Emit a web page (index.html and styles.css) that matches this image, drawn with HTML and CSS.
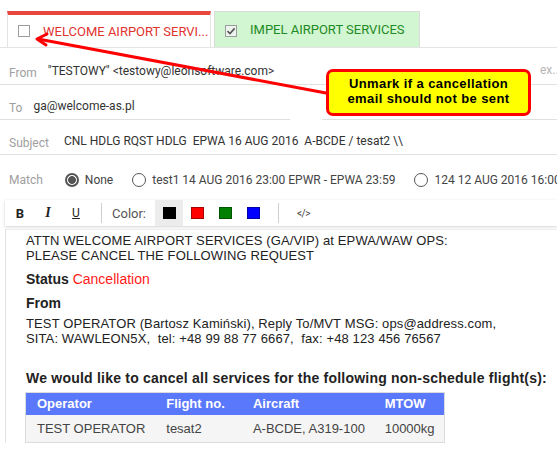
FILE: index.html
```html
<!DOCTYPE html>
<html>
<head>
<meta charset="utf-8">
<link rel="stylesheet" href="styles.css">
</head>
<body>
<div class="app">
  <div class="tabs">
    <div class="tab tab-active"><span class="cb"></span><span class="tab-label">WELCOME AIRPORT SERVI...</span></div>
    <div class="tab tab-checked"><span class="cb cb-checked"><svg width="10" height="10" viewBox="0 0 10 10"><path d="M1.5 5.2 L4 7.6 L8.6 2.4" fill="none" stroke="#555" stroke-width="1.6"/></svg></span><span class="tab-label">IMPEL AIRPORT SERVICES</span></div>
  </div>

  <div class="fields">
    <div class="row row-line">
      <span class="lbl lbl-from">From</span>
      <span class="val">"TESTOWY" &lt;testowy@leonsoftware.com&gt;</span>
      <span class="ph">ex...</span>
    </div>
    <div class="row row-split">
      <div class="field field-to"><span class="lbl lbl-to">To</span><span class="val">ga@welcome-as.pl</span></div>
      <div class="field field-cc"></div>
    </div>
    <div class="row row-line">
      <span class="lbl lbl-subject">Subject</span>
      <span class="val">CNL HDLG RQST HDLG&nbsp; EPWA 16 AUG 2016&nbsp; A-BCDE / tesat2 \\</span>
    </div>
    <div class="match">
      <span class="lbl lbl-match">Match</span>
      <span class="radio radio-on"></span><span class="opt">None</span>
      <span class="radio"></span><span class="opt">test1 14 AUG 2016 23:00 EPWR - EPWA 23:59</span>
      <span class="radio"></span><span class="opt">124 12 AUG 2016 16:00</span>
    </div>
  </div>

  <div class="toolbar">
    <span class="tb-btn tb-b">B</span>
    <span class="tb-btn tb-i">I</span>
    <span class="tb-btn tb-u">U</span>
    <span class="tb-sep"></span>
    <span class="tb-color">Color:</span>
    <span class="sw-box sw-active"><span class="sw sw-black"></span></span>
    <span class="sw-box"><span class="sw sw-red"></span></span>
    <span class="sw-box"><span class="sw sw-green"></span></span>
    <span class="sw-box"><span class="sw sw-blue"></span></span>
    <span class="tb-sep tb-sep2"></span>
    <span class="tb-code">&lt;/&gt;</span>
  </div>

  <div class="editor">
    <p class="p-attn">ATTN WELCOME AIRPORT SERVICES (GA/VIP) at EPWA/WAW OPS:<br>PLEASE CANCEL THE FOLLOWING REQUEST</p>
    <p class="p-status"><b>Status</b> <span class="red">Cancellation</span></p>
    <p class="p-from"><b>From</b></p>
    <p class="p-op">TEST OPERATOR (Bartosz Kamiński), Reply To/MVT MSG: ops@address.com,<br>SITA: WAWLEON5X,&nbsp; tel: +48 99 88 77 6667,&nbsp; fax: +48 123 456 76567</p>
    <p class="p-cancel"><b>We would like to cancel all services for the following non-schedule flight(s):</b></p>
    <table class="flights">
      <thead>
        <tr><th class="c1">Operator</th><th class="c2">Flight no.</th><th class="c3">Aircraft</th><th class="c4">MTOW</th></tr>
      </thead>
      <tbody>
        <tr><td>TEST OPERATOR</td><td>tesat2</td><td>A-BCDE, A319-100</td><td>10000kg</td></tr>
      </tbody>
    </table>
  </div>

  <svg class="arrow" width="557" height="452" viewBox="0 0 557 452">
    <path d="M326 93 L38 39" fill="none" stroke="#ff0000" stroke-width="3" stroke-linecap="round"/>
    <path d="M47 34 L37 39 L46 45" fill="none" stroke="#ff0000" stroke-width="3" stroke-linecap="round" stroke-linejoin="round"/>
  </svg>

  <div class="callout">Unmark if a cancellation<br>email should not be sent</div>
</div>
</body>
</html>
```

FILE: styles.css
```css
* { box-sizing: border-box; }
html, body { margin: 0; padding: 0; }
body {
  width: 557px;
  height: 452px;
  overflow: hidden;
  background: #fff;
  color: #333;
  font-family: Roboto, "Liberation Sans", Arial, sans-serif;
}
.app {
  position: relative;
  width: 557px;
  height: 452px;
  overflow: hidden;
}

/* Tabs */
.tabs {
  display: flex;
  align-items: flex-end;
  gap: 3px;
  height: 48px;
  padding: 11px 0 0 7px;
  border-bottom: 1px solid #e4e4e4;
}
.tab {
  display: flex;
  align-items: center;
  height: 36px;
  padding: 0 10px 0 10px;
  font-size: 13px;
  white-space: nowrap;
  overflow: hidden;
}
.tab-active {
  width: 204px;
  border: 1px solid #e4e4e4;
  border-top: 4px solid #e8473e;
  border-bottom: none;
  color: #e0342f;
  background: #fff;
}
.tab-checked {
  width: 206px;
  border: 1px solid #dadada;
  border-bottom: none;
  background: #d1f6d1;
  color: #1f8a24;
}
.cb {
  flex: none;
  width: 12px;
  height: 12px;
  margin-right: 13px;
  border: 1px solid #9c9c9c;
  background: #fff;
  display: flex;
  align-items: center;
  justify-content: center;
}
.cb-checked { background: #eef5ee; margin-top: 2px; }
.cb svg { display: block; }

/* Fields */
.fields { padding-top: 2px; }
.row {
  display: flex;
  align-items: flex-end;
  height: 35px;
  padding-bottom: 5px;
  font-size: 12px;
  line-height: 16px;
  white-space: nowrap;
}
.row-line { border-bottom: 1px solid #e0e0e0; padding-left: 9px; }
.lbl {
  color: #9e9e9e;
  font-size: 12px;
  margin-bottom: -2px;
}
.val { color: #333; }
.lbl-from { margin-right: 11px; }
.lbl-to { margin-right: 11px; }
.lbl-subject { margin-right: 15px; }
.ph {
  margin-left: auto;
  width: 17px;
  color: #b5b5b5;
  margin-bottom: 1px;
}
.row-split { padding-bottom: 0; }
.field {
  display: flex;
  align-items: flex-end;
  height: 100%;
  padding-bottom: 5px;
  border-bottom: 1px solid #e0e0e0;
}
.field-to { width: 290px; padding-left: 9px; }
.field-cc { flex: 1; margin-left: 32px; }

.match {
  display: flex;
  align-items: center;
  height: 36px;
  margin-top: 7px;
  padding-left: 9px;
  font-size: 12px;
  white-space: nowrap;
  color: #444;
}
.lbl-match { margin-bottom: 0; margin-right: 22px; }
.radio {
  flex: none;
  width: 14px;
  height: 14px;
  border: 1px solid #555;
  border-radius: 50%;
  margin-right: 6px;
}
.radio-on {
  border: 2px solid #555;
  background: radial-gradient(circle, #555 0 3.6px, #fff 4.2px);
}
.opt { margin-right: 19px; }

/* Toolbar */
.toolbar {
  display: flex;
  align-items: center;
  height: 26px;
  margin: 2px 0 0 5px;
  background: #fff;
  box-shadow: 0 1px 3px rgba(0,0,0,0.18);
  font-size: 13px;
  color: #222;
}
.tb-btn {
  width: 28px;
  text-align: center;
}
.tb-b { margin-left: 1px; font-weight: bold; font-size: 13px; }
.tb-i { font-family: "Liberation Serif", serif; font-style: italic; font-weight: bold; font-size: 14px; }
.tb-u { text-decoration: underline; font-size: 12px; }
.tb-sep {
  width: 1px;
  height: 20px;
  background: #cfcfcf;
  margin: 0 10px 0 11px;
}
.tb-color { color: #555; margin-right: 9px; }
.sw-box {
  display: flex;
  align-items: center;
  justify-content: center;
  width: 28px;
  height: 100%;
}
.sw-active { background: #ececec; }
.sw {
  width: 13px;
  height: 12px;
  border: 1px solid rgba(0,0,0,0.35);
}
.sw-black { background: #000; }
.sw-red { background: #f00; }
.sw-green { background: #008000; }
.sw-blue { background: #0000ff; }
.tb-sep2 { margin: 0 18px 0 11px; }
.tb-code { font-size: 10px; color: #444; letter-spacing: -0.5px; }

/* Editor body */
.editor {
  margin: 3px 0 0 5px;
  border-left: 1px solid #e2e2e2;
  border-top: 1px solid #eeeeee;
  padding: 3px 0 0 20px;
  font-family: "Liberation Sans", Arial, sans-serif;
  font-size: 13px;
  line-height: 15px;
  letter-spacing: 0.12px;
  color: #222;
  white-space: nowrap;
}
.editor p { margin: 0; }
.p-status, .p-from, .p-cancel { font-size: 14px; line-height: 16px; letter-spacing: 0; }
.p-status { margin-top: 8px !important; }
.p-from { margin-top: 8px !important; }
.p-op { margin-top: 5px !important; }
.p-cancel { margin-top: 24px !important; letter-spacing: 0.22px; }
.red { color: #ff1a1a; }

.flights {
  margin: 6px 0 0 -1px;
  border-collapse: collapse;
  border: 1px solid #dcdcdc;
  width: 420px;
  letter-spacing: 0;
}
.flights th {
  background: #5a78fb;
  color: #fff;
  font-weight: bold;
  text-align: left;
  height: 22px;
  padding: 0 0 0 11px;
}
.flights td {
  background: #f5f5f5;
  color: #444;
  height: 28px;
  padding: 0 0 0 11px;
}
.c1 { width: 130px; }
.c2 { width: 87px; }
.c3 { width: 132px; }
.c4 { width: 71px; }

/* Annotation overlay */
.arrow {
  position: absolute;
  left: 0;
  top: 0;
  pointer-events: none;
}
.callout {
  position: absolute;
  left: 326px;
  top: 69px;
  width: 205px;
  height: 47px;
  padding-top: 4px;
  border: 3px solid #ff0000;
  border-radius: 7px;
  background: #ffff00;
  color: #000;
  font-family: "Liberation Sans", Arial, sans-serif;
  font-weight: bold;
  font-size: 13px;
  line-height: 15px;
  text-align: center;
  letter-spacing: 0.4px;
}
```
